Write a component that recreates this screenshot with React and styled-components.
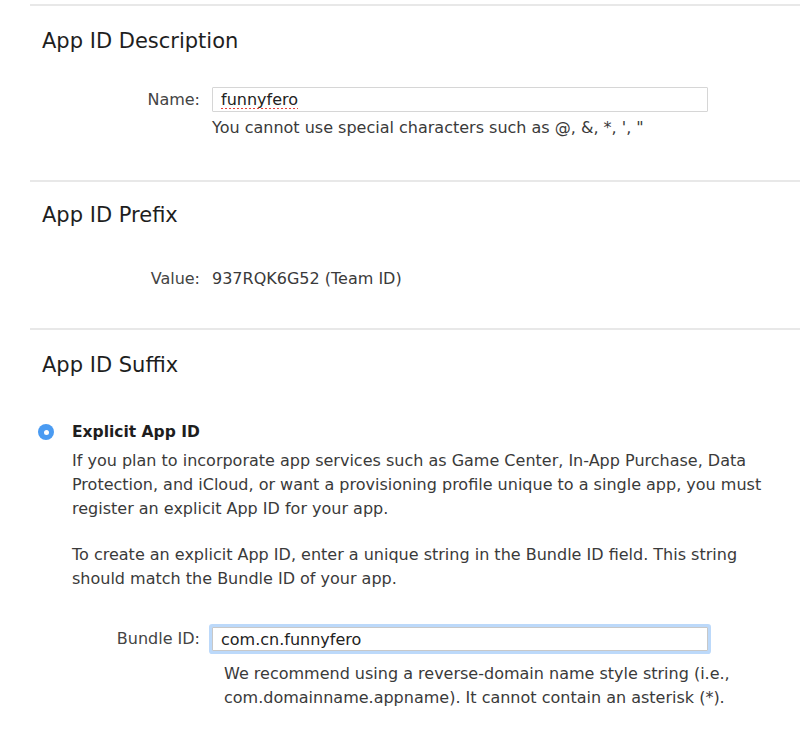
import styled, { createGlobalStyle } from "styled-components";

const GlobalStyle = createGlobalStyle`
  body {
    margin: 0;
    background: #fff;
    font-family: "DejaVu Sans", "Liberation Sans", sans-serif;
    color: #333;
  }
`;

const App = () => {
  return (
    <>
      <GlobalStyle />
      <Page>
        <Section $top={21} $bottom={42}>
          <Heading>App ID Description</Heading>
          <FormRow $mt={32}>
            <Label>Name:</Label>
            <Input defaultValue="funnyfero" $spell spellCheck={false} />
          </FormRow>
          <FormRow $mt={6}>
            <span />
            <Hint>You cannot use special characters such as @, &amp;, *, ', "</Hint>
          </FormRow>
        </Section>

        <Section $top={19} $bottom={37}>
          <Heading>App ID Prefix</Heading>
          <FormRow $mt={38}>
            <Label>Value:</Label>
            <Value>937RQK6G52 (Team ID)</Value>
          </FormRow>
        </Section>

        <Section $top={21} $bottom={14}>
          <Heading>App ID Suffix</Heading>
          <Option>
            <Radio />
            <OptionBody>
              <OptionTitle>Explicit App ID</OptionTitle>
              <Para>
                If you plan to incorporate app services such as Game Center, In-App Purchase, Data
                Protection, and iCloud, or want a provisioning profile unique to a single app, you must
                register an explicit App ID for your app.
              </Para>
              <Para $mt={22}>
                To create an explicit App ID, enter a unique string in the Bundle ID field. This string
                should match the Bundle ID of your app.
              </Para>
            </OptionBody>
          </Option>
          <FormRow $mt={36}>
            <Label>Bundle ID:</Label>
            <Input defaultValue="com.cn.funnyfero" $focus spellCheck={false} />
          </FormRow>
          <FormRow $mt={11}>
            <span />
            <SubHint>
              We recommend using a reverse-domain name style string (i.e.,
              com.domainname.appname). It cannot contain an asterisk (*).
            </SubHint>
          </FormRow>
        </Section>
      </Page>
    </>
  );
};

export default App;

const Page = styled.div`
  padding: 4px 0 0 30px;
`;

const Section = styled.section`
  border-top: 2px solid #e8e8e8;
  padding-top: ${(p) => p.$top}px;
  padding-bottom: ${(p) => p.$bottom}px;
`;

const Heading = styled.h2`
  margin: 0;
  padding-left: 12px;
  font-size: 21px;
  line-height: 28px;
  font-weight: 400;
  color: #1e1e1e;
`;

const FormRow = styled.div`
  display: grid;
  grid-template-columns: 170px 1fr;
  column-gap: 12px;
  align-items: center;
  margin-top: ${(p) => p.$mt || 0}px;
`;

const Label = styled.label`
  text-align: right;
  font-size: 16px;
  line-height: 24px;
  color: #444;
`;

const Input = styled.input`
  box-sizing: border-box;
  width: 496px;
  height: ${(p) => (p.$focus ? 24 : 25)}px;
  margin: 0;
  padding: 0 8px;
  border: 1px solid ${(p) => (p.$focus ? "#c8c8c8" : "#d6d6d6")};
  border-radius: 1px;
  font-family: "DejaVu Sans", sans-serif;
  font-size: 16px;
  color: #222;
  outline: none;
  box-shadow: ${(p) => (p.$focus ? "0 0 0 3px #bcd9fa" : "none")};
  text-decoration: ${(p) => (p.$spell ? "underline dotted #e8403a" : "none")};
  text-underline-offset: 3px;
  text-decoration-thickness: 1.5px;
`;

const Hint = styled.div`
  font-size: 16px;
  line-height: 20px;
  color: #3a3a3a;
`;

const Value = styled.div`
  font-size: 16px;
  line-height: 24px;
  color: #3a3a3a;
`;

const Option = styled.div`
  display: flex;
  align-items: flex-start;
  gap: 18px;
  margin-top: 41px;
  padding-left: 8px;
`;

const Radio = styled.span`
  flex: none;
  width: 16px;
  height: 16px;
  margin-top: 4px;
  border-radius: 50%;
  background: #4a9bf2;
  position: relative;

  &::after {
    content: "";
    position: absolute;
    left: 5.5px;
    top: 5.5px;
    width: 5px;
    height: 5px;
    border-radius: 50%;
    background: #fff;
  }
`;

const OptionBody = styled.div`
  max-width: 705px;
`;

const OptionTitle = styled.div`
  font-size: 15.5px;
  line-height: 24px;
  font-weight: 700;
  color: #1e1e1e;
  margin-bottom: 5px;
`;

const Para = styled.p`
  margin: ${(p) => p.$mt || 0}px 0 0;
  font-size: 16px;
  line-height: 24px;
  color: #3a3a3a;
`;

const SubHint = styled.div`
  padding-left: 12px;
  width: 540px;
  font-size: 16px;
  line-height: 24px;
  color: #3a3a3a;
`;
